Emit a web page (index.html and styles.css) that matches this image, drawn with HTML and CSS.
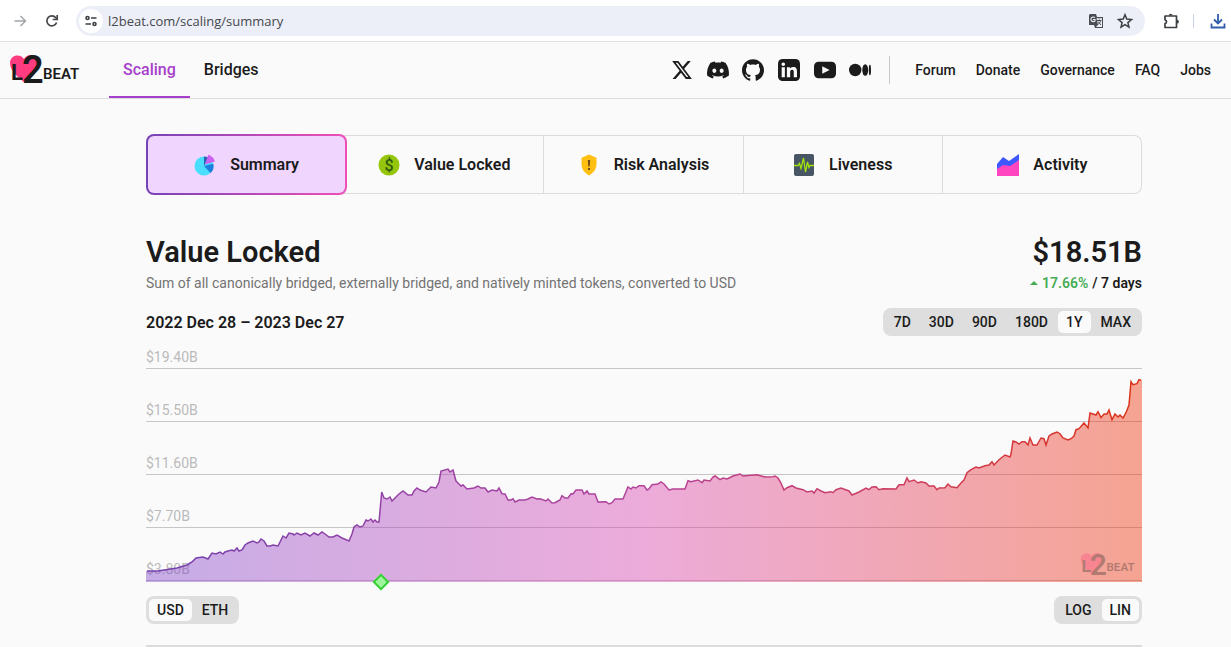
FILE: index.html
```html
<!DOCTYPE html>
<html lang="en">
<head>
<meta charset="utf-8">
<title>L2BEAT – Scaling summary</title>
<link rel="stylesheet" href="styles.css">
</head>
<body>
<svg class="defs" width="0" height="0" aria-hidden="true">
  <symbol id="logo" viewBox="0 0 72 32">
    <path d="M16 29C9 23 1 17 1 9c0-8 10-10 14-4 4-7 15-4 15 4 0 8-7 14-14 20z" fill="#ff3c80"/>
    <text class="logo-l" x="2" y="26">L</text>
    <text class="logo-two" x="13" y="29">2</text>
    <text class="logo-beat" x="34" y="25">BEAT</text>
  </symbol>
</svg>

<div class="browser">
  <button class="tool forward" aria-label="Forward"><svg width="16" height="16" viewBox="0 0 16 16" fill="none" stroke="#a0a3a7" stroke-width="1.4"><path d="M2.500 8h11M8.500 3l5 5-5 5"/></svg></button>
  <button class="tool" aria-label="Reload"><svg width="16" height="16" viewBox="0 0 16 16" fill="none" stroke="#45474a" stroke-width="1.7"><path d="M12.600 9.500A5 5 0 1 1 11.800 4.800L13 6"/><path d="M13.200 2v4.500H8.700"/></svg></button>
  <div class="address">
    <button class="site-info" aria-label="Site information"><svg width="14" height="14" viewBox="0 0 14 14" fill="none" stroke="#3c4043" stroke-width="1.600"><circle cx="3.500" cy="4" r="1.500"/><path d="M7 4h5.500M1.500 10H7"/><circle cx="10.500" cy="10" r="1.500"/></svg></button>
    <input class="url" aria-label="Address" value="l2beat.com/scaling/summary">
    <button class="tool" aria-label="Translate"><svg width="16" height="16" viewBox="0 0 16 16"><path d="M2 1h6l1 3h6v11H7l-1-3H1V2z" fill="#4a4d51"/><path d="M8.500 5.200H14v8.700H8l2-2.200z" fill="#edeff8"/><path d="M9 7.500h4.500M11.300 6.300v1.200M12.600 7.500c-.3 2-1.500 3.300-3 4.300M10 8.500l3 3.500" stroke="#4a4d51" fill="none"/><path d="M6.900 4.700A2.300 2.300 0 1 0 7 7.800V6.500H5" stroke="#edeff8" fill="none" stroke-width="1.100"/></svg></button>
    <button class="tool" aria-label="Bookmark"><svg width="16" height="16" viewBox="0 0 16 16" fill="none" stroke="#3c4043" stroke-width="1.500"><path d="M8 1.800l1.800 4.300 4.700.4-3.600 3.100 1.100 4.600L8 11.700l-4 2.500 1.100-4.600L1.500 6.500l4.700-.4z"/></svg></button>
  </div>
  <button class="tool extensions" aria-label="Extensions"><svg width="18" height="18" viewBox="0 0 18 18" fill="none" stroke="#3c4043" stroke-width="1.700" stroke-linejoin="round"><path d="M3 4h11.500v11.500H3v-3.800a2 2 0 0 0 0-3.900z"/><path d="M6.800 3.600a1.900 1.900 0 0 1 3.800 0zM15 7.800a1.900 1.900 0 0 1 0 3.800z" fill="#3c4043" stroke="none"/></svg></button>
  <span class="tool-rule"></span>
  <button class="tool download" aria-label="Downloads"><svg width="16" height="16" viewBox="0 0 16 16" fill="none" stroke="#2f5dab" stroke-width="1.800"><path d="M8 1v9M4 6.500l4 4 4-4M1.500 10.500v4h13v-4"/></svg></button>
</div>

<header class="site-header">
  <a class="logo" href="#" aria-label="L2BEAT home"><svg width="72" height="32"><use href="#logo"/></svg></a>
  <nav class="main-nav">
    <a class="main-link active" href="#">Scaling</a>
    <a class="main-link" href="#">Bridges</a>
  </nav>
  <div class="social">
    <a href="#" aria-label="X"><svg width="22" height="22" viewBox="0 0 24 24"><path d="M18.244 2.250h3.308l-7.227 8.260 8.502 11.240H16.170l-5.214-6.817L4.990 21.750H1.680l7.730-8.835L1.254 2.250H8.080l4.713 6.231zm-1.161 17.520h1.833L7.084 4.126H5.117z"/></svg></a>
    <a href="#" aria-label="Discord"><svg width="22" height="22" viewBox="0 0 24 24"><path d="M20.317 4.370a19.791 19.791 0 00-4.885-1.515.074.074 0 00-.079.037c-.211.375-.445.865-.608 1.250-1.845-.276-3.680-.276-5.487 0-.164-.393-.406-.874-.618-1.250a.077.077 0 00-.079-.037 19.736 19.736 0 00-4.885 1.515.070.070 0 00-.032.028C.533 9.046-.319 13.580.099 18.058a.082.082 0 00.031.056c2.053 1.508 4.041 2.423 5.993 3.029a.078.078 0 00.084-.028c.462-.630.873-1.295 1.226-1.994a.076.076 0 00-.042-.106c-.653-.248-1.274-.550-1.872-.892a.077.077 0 01-.008-.128c.126-.094.252-.192.372-.291a.074.074 0 01.078-.011c3.928 1.793 8.180 1.793 12.061 0a.074.074 0 01.079.010c.120.099.246.198.373.292a.077.077 0 01-.007.128 12.299 12.299 0 01-1.873.891.077.077 0 00-.041.107c.360.698.772 1.363 1.225 1.993a.076.076 0 00.084.029c1.961-.607 3.950-1.522 6.002-3.029a.077.077 0 00.031-.055c.500-5.177-.838-9.674-3.549-13.660a.061.061 0 00-.031-.029zM8.020 15.331c-1.183 0-2.157-1.086-2.157-2.419s.956-2.419 2.157-2.419c1.211 0 2.176 1.095 2.157 2.419 0 1.333-.956 2.419-2.157 2.419zm7.975 0c-1.183 0-2.157-1.086-2.157-2.419s.955-2.419 2.157-2.419c1.211 0 2.176 1.095 2.157 2.419 0 1.333-.946 2.419-2.157 2.419z"/></svg></a>
    <a href="#" aria-label="GitHub"><svg width="22" height="22" viewBox="0 0 24 24"><path d="M12 .297c-6.630 0-12 5.373-12 12 0 5.303 3.438 9.800 8.205 11.385.6.113.82-.258.82-.577 0-.285-.010-1.040-.015-2.040-3.338.724-4.042-1.610-4.042-1.610C4.422 18.070 3.633 17.700 3.633 17.700c-1.087-.744.084-.729.084-.729 1.205.084 1.838 1.236 1.838 1.236 1.070 1.835 2.809 1.305 3.495.998.108-.776.417-1.305.76-1.605-2.665-.3-5.466-1.332-5.466-5.930 0-1.310.465-2.380 1.235-3.220-.135-.303-.54-1.523.105-3.176 0 0 1.005-.322 3.300 1.230.96-.267 1.980-.399 3-.405 1.020.006 2.040.138 3 .405 2.280-1.552 3.285-1.230 3.285-1.230.645 1.653.24 2.873.12 3.176.765.84 1.230 1.910 1.230 3.220 0 4.610-2.805 5.625-5.475 5.920.42.36.81 1.096.81 2.220 0 1.606-.015 2.896-.015 3.286 0 .315.21.69.825.57C20.565 22.092 24 17.592 24 12.297c0-6.627-5.373-12-12-12"/></svg></a>
    <a href="#" aria-label="LinkedIn"><svg width="22" height="22" viewBox="0 0 24 24"><rect x="0" y="0" width="24" height="24" rx="5"/><path d="M4 9h3.500v11H4zM5.750 3.700a2 2 0 1 1 0 4 2 2 0 0 1 0-4zM9.700 9H13v1.500c.5-.9 1.700-1.800 3.500-1.800 3.500 0 4.200 2.200 4.200 5.200V20h-3.500v-5.400c0-1.300 0-2.900-1.800-2.900s-2.100 1.400-2.100 2.800V20H9.700z" fill="#fafafa"/></svg></a>
    <a href="#" aria-label="YouTube"><svg width="22" height="22" viewBox="0 0 24 24"><rect x="0" y="3" width="24" height="18" rx="5"/><path d="M9 8v8l8-4z" fill="#fafafa"/></svg></a>
    <a href="#" aria-label="Medium"><svg width="22" height="22" viewBox="0 0 24 24"><circle cx="6.800" cy="12" r="6.800"/><ellipse cx="17.700" cy="12" rx="3.200" ry="6.400"/><ellipse cx="22.800" cy="12" rx="1.200" ry="5.700"/></svg></a>
  </div>
  <nav class="side-nav">
    <a href="#">Forum</a><a href="#">Donate</a><a href="#">Governance</a><a href="#">FAQ</a><a href="#">Jobs</a>
  </nav>
</header>

<main class="content">
  <nav class="tabs">
    <a class="tab selected" href="#"><svg width="22" height="22" viewBox="0 0 22 22"><circle cx="10" cy="12" r="9.500" fill="#49dffc"/><path d="M10 12V2.500a9 9 0 0 1 4 1z" fill="#345fb8"/><path d="M10 12l9.300-2.200a9.500 9.500 0 0 1-2.800 9.300z" fill="#1c7fe0"/><path d="M11 10.500L14.200.8a9.500 9.500 0 0 1 6.600 6.700z" fill="#cb62f0"/></svg>Summary</a>
    <a class="tab" href="#"><svg width="22" height="22" viewBox="0 0 22 22"><circle cx="11" cy="11" r="10.500" fill="#96c60b"/><text class="coin-sign" x="11" y="17">$</text></svg>Value Locked</a>
    <a class="tab" href="#"><svg width="22" height="22" viewBox="0 0 22 22"><path d="M11 .5l7.500 3.200V10c0 5-3 9-7.500 11.500C6.500 19 3.500 15 3.500 10V3.700z" fill="#ffc012"/><path d="M9.800 6h2.400l-.5 6.500h-1.400zM10 14h2v2h-2z" fill="#734a1b"/></svg>Risk Analysis</a>
    <a class="tab" href="#"><svg width="22" height="22" viewBox="0 0 22 22"><rect x="1" y="0" width="20" height="22" rx="2" fill="#475565"/><path d="M1 11.500h4l1.500-2 1.500 5L10.500 4l2 14 2-10 1.500 5.500 1-2H21" fill="none" stroke="#a1e30b" stroke-width="1.300"/></svg>Liveness</a>
    <a class="tab" href="#"><svg width="22" height="22" viewBox="0 0 22 22"><path d="M0 22V10l6-7 6 4 10-7v22z" fill="#3f57ff"/><path d="M0 22v-7l6-4 7 1 9-6v16z" fill="#ff46c0"/></svg>Activity</a>
  </nav>

  <section class="summary">
    <div class="summary-row headline">
      <h1>Value Locked</h1>
      <strong class="amount">$18.51B</strong>
    </div>
    <div class="summary-row details">
      <p class="description">Sum of all canonically bridged, externally bridged, and natively minted tokens, converted to USD</p>
      <p class="change"><svg width="8" height="4" viewBox="0 0 8 4"><path d="M0 4l4-4 4 4z" fill="#46ac55"/></svg><span class="gain">17.66%</span> / 7 days</p>
    </div>
    <div class="summary-row range">
      <h2>2022 Dec 28 – 2023 Dec 27</h2>
      <div class="segmented" role="group" aria-label="Time range">
        <button>7D</button><button>30D</button><button>90D</button><button>180D</button><button class="on" aria-pressed="true">1Y</button><button>MAX</button>
      </div>
    </div>
  </section>

  <section class="chart" aria-label="Value locked chart">
    <div class="grid">
      <span>$19.40B</span><span>$15.50B</span><span>$11.60B</span><span>$7.70B</span><span>$3.80B</span>
    </div>
    <svg class="plot" viewBox="146 368 996 214" preserveAspectRatio="none" aria-hidden="true">
      <defs>
        <linearGradient id="tone" gradientUnits="userSpaceOnUse" x1="146" y1="0" x2="1142" y2="0">
          <stop offset="0" stop-color="#7e41cc"/><stop offset=".5" stop-color="#d93fae"/><stop offset="1" stop-color="#ee2c01"/>
        </linearGradient>
        <linearGradient id="line-tone" gradientUnits="userSpaceOnUse" x1="146" y1="0" x2="1142" y2="0">
          <stop offset="0" stop-color="#7440ae"/><stop offset=".5" stop-color="#b4449b"/><stop offset=".75" stop-color="#cc3c60"/><stop offset="1" stop-color="#dc3315"/>
        </linearGradient>
        <path id="series" d="M146 571L158 571 177 568 187 565 192 562 196 558 203 557 208 559 212 553 216 554 220 552 223 554 225 552 228 551 232 550 234 551 237 548 239 551 242 550 245 545 248 543 253 541 257 543 259 542 261 539 264 541 267 546 270 546 273 545 278 546 280 542 283 536 286 538 289 533 293 534 294 535 297 533 301 535 305 533 310 536 314 533 318 535 322 532 325 534 329 537 333 537 337 535 342 538 349 541 352 534 354 527 357 525 360 527 363 526 366 520 368 521 371 519 373 522 375 520 377 522 379 522 381.700 492 384 498 387 499 390 497 392 501 396 497 399 494 403 491 408 495 412 495 414 491 417 488 420 490 426 492 431 487 436 488 439 482 441 471 448 469 450 472 453 470 456 481 458 483 461 486 463 485 467 489 474 488 478 486 481 488 485 488 488 492 492 490 497 491 499 488 502 493.700 505 494 508 500 511 500 513 498.700 515 502 519 500 525 500 528 499 532 497 537 499 540 498.700 546 501 548 499 552 503 555 502.700 558 501 560 500 562 495.700 565 498 568 498 571 493.700 573 494 576 490 582 490 584 494 587 491 589 494 595 494 598 502 606 501.700 609 504 612 502.700 615 499 623 499 628 487 631 489 633 487 636 488 639 485.700 644 485.700 647 490 649 489 652 484.700 658 484 661 482 664 484 669 490 673 489 685 489 688 480.700 691 481.700 698 480 702 482.700 704 480 710 481 713 477 715 476 720 479.700 723 478 727 479 733 476 740 474 743 476 757 474.700 765 477 773 476.700 775 476 778 478 781 483 784 490 787 487.700 792 485.700 796 488 803 489.700 807 492 812 491 814 493 817 488.700 821 491 825 492.700 831 491.700 833 492.700 836 489.700 841 488 849 491 852 495 855 493.700 859 492 866 488 869 489.700 872 487 876 486.700 879 489.700 883 488.700 896 489 899 484.700 904 484.700 907 478 909 481.700 914 480 918 483 921 481.700 926 483 929 486 934 486 937 489.700 939 488 945 487.700 948 484 951 486.700 957 487.700 961 483 964 480 967 472.700 971 469.700 976 467 979 468 985 465.700 989 465 992 461.700 994 465 999 459.700 1005 455 1010 457 1011 454 1013 441 1016 442 1019 444 1022 441.700 1025 441.700 1028 445 1030 438 1033 445 1037 445 1041 438 1044 438.700 1046 445 1049 436 1052 434 1057 432 1060 433.700 1063 438 1068 440 1071 438.700 1074 436 1076 429.700 1079 428.700 1084 423 1088 428 1090 413 1096 415 1098 411.700 1101 417.700 1104 414 1107 414 1109 410 1112 419.700 1115 414 1118 417 1120 415 1123 418 1126 412.700 1129 405 1131 381.700 1133 384.700 1137 383.700 1139 379.700 1142 380V582H146z"/>
        <clipPath id="plot-area"><rect x="147" y="360" width="994" height="220"/></clipPath>
      </defs>
      <use href="#series" fill="url(#tone)" opacity=".42"/>
      <use href="#series" fill="none" stroke="url(#line-tone)" stroke-width="1.500" clip-path="url(#plot-area)"/>
    </svg>
    <svg class="watermark" width="56" height="25" viewBox="0 0 72 32" aria-hidden="true"><use href="#logo" width="72" height="32"/></svg>
    <button class="milestone" aria-label="Milestone"></button>
  </section>

  <div class="chart-controls">
    <div class="segmented" role="group" aria-label="Currency"><button class="on" aria-pressed="true">USD</button><button>ETH</button></div>
    <div class="segmented" role="group" aria-label="Scale"><button>LOG</button><button class="on" aria-pressed="true">LIN</button></div>
  </div>
  <hr class="divider">
</main>
</body>
</html>
```

FILE: styles.css
```css
* { box-sizing: border-box; }

body {
  margin: 0;
  background: #fafafa;
  color: #1b1b1b;
  font-family: Roboto, "Liberation Sans", sans-serif;
}

h1, h2, p { margin: 0; }
a { color: inherit; text-decoration: none; }
svg { display: block; flex: none; overflow: visible; }
symbol { overflow: visible; }
.defs { position: absolute; }

button {
  padding: 0;
  border: 0;
  background: none;
  color: inherit;
  font: inherit;
}

/* Browser bar */
.browser {
  display: flex;
  align-items: center;
  height: 42px;
  padding-left: 12px;
  border-bottom: 1px solid #dfe0e3;
  background: #fff;
}

.tool { display: grid; place-items: center; width: 16px; height: 28px; }
.forward { margin-right: 16px; }

.address {
  display: flex;
  flex: 1;
  align-items: center;
  gap: 13px;
  height: 30px;
  margin-left: 16px;
  padding: 0 12px 0 3px;
  border-radius: 15px;
  background: #edeff8;
}

.site-info {
  display: grid;
  place-items: center;
  width: 24px;
  height: 24px;
  border-radius: 50%;
  background: #fff;
}

.url {
  flex: 1;
  margin-left: -8px;
  padding: 0;
  border: 0;
  background: none;
  color: #45474c;
  font: 13px "Open Sans", sans-serif;
}

.extensions { margin-left: 17px; }
.tool-rule { width: 1px; height: 14px; margin: 0 16px 0 15px; background: #c9d3e8; }
.download { margin-right: 5px; }

/* Site header */
.site-header {
  display: flex;
  align-items: center;
  height: 57px;
  padding: 0 20px 0 9px;
  border-bottom: 1px solid #dcdcdc;
}

.logo-l, .logo-two, .logo-beat { fill: #1b1b1b; font-family: Roboto, sans-serif; }
.logo-l { font-size: 22px; font-weight: 700; }
.logo-two { font-size: 38px; font-weight: 600; }
.logo-beat { font-size: 15px; font-weight: 600; }

.main-nav { display: flex; align-self: stretch; margin-left: 28px; }

.main-link {
  display: flex;
  align-items: center;
  padding: 0 14px;
  border-bottom: 2px solid transparent;
  font-size: 16px;
  font-weight: 500;
}

.main-link.active {
  border-color: #a63fcb;
  color: #a63fcb;
}

.social {
  display: flex;
  justify-content: space-between;
  width: 200px;
  margin-left: auto;
}

.social svg { fill: #1b1b1b; }

.side-nav {
  display: flex;
  align-items: center;
  gap: 20px;
  height: 28px;
  margin-left: 18px;
  padding-left: 25px;
  border-left: 1px solid #c9c9c9;
  font-size: 14px;
  font-weight: 500;
}

/* Page content */
.content { padding: 36px 89px 0 146px; }

.tabs {
  display: grid;
  grid-template-columns: repeat(5, 1fr);
  height: 59px;
  border-radius: 8px;
  box-shadow: inset 0 0 0 1px #dcdcdc;
}

.tab {
  display: flex;
  align-items: center;
  justify-content: center;
  gap: 14px;
  border-right: 1px solid #dcdcdc;
  font-size: 16px;
  font-weight: 600;
}

.tab:last-child { border-right: 0; }

.tab.selected {
  margin: -1px -2px -1px 0;
  border: 2px solid transparent;
  border-radius: 8px;
  background:
    linear-gradient(#f0d6ff, #f0d6ff) padding-box,
    linear-gradient(90deg, #7543b5, #f04fb8) border-box;
}

.coin-sign { fill: #2d5b13; font: 500 16px Roboto, sans-serif; text-anchor: middle; }

.summary { margin-top: 40px; }
.summary-row { display: flex; align-items: center; justify-content: space-between; }
.headline { height: 36px; }
.headline h1, .amount { font-size: 29px; font-weight: 600; }
.details { height: 26px; }
.description { color: #737373; font-size: 14px; }
.change { display: flex; align-items: center; gap: 4px; font-size: 14px; font-weight: 600; }
.gain { color: #46ac55; }
.range { height: 28px; margin-top: 12px; }
.range h2 { font-size: 16px; font-weight: 600; }

.segmented {
  display: flex;
  gap: 2px;
  height: 28px;
  padding: 3px;
  border-radius: 8px;
  background: #dedede;
  font-size: 14px;
  font-weight: 500;
}

.segmented button { padding: 0 8px; border-radius: 5px; }
.segmented .on { background: #fafafa; }

/* Chart */
.chart { position: relative; margin-top: 12px; padding-bottom: 1px; }
.grid { display: grid; grid-template-rows: 21px; grid-auto-rows: 53px; }

.grid span {
  display: flex;
  align-items: end;
  padding-bottom: 3px;
  border-bottom: 1px solid #c6c6c6;
  color: #bababa;
  font-size: 14px;
  line-height: 16px;
}

.plot {
  position: absolute;
  right: 0;
  bottom: 0;
  left: 0;
  width: 100%;
  height: 214px;
}

.watermark { position: absolute; right: 6px; bottom: 5px; opacity: .3; }

.milestone {
  position: absolute;
  bottom: -6px;
  left: 23.600%;
  width: 12px;
  height: 12px;
  margin-left: -6px;
  border: 2px solid #36cf36;
  background: #a0f59a;
  transform: rotate(45deg);
}

.chart-controls { display: flex; justify-content: space-between; margin-top: 14px; }
.divider { height: 2px; margin: 21px 0 0; border: 0; background: #dcdcdc; }
```
